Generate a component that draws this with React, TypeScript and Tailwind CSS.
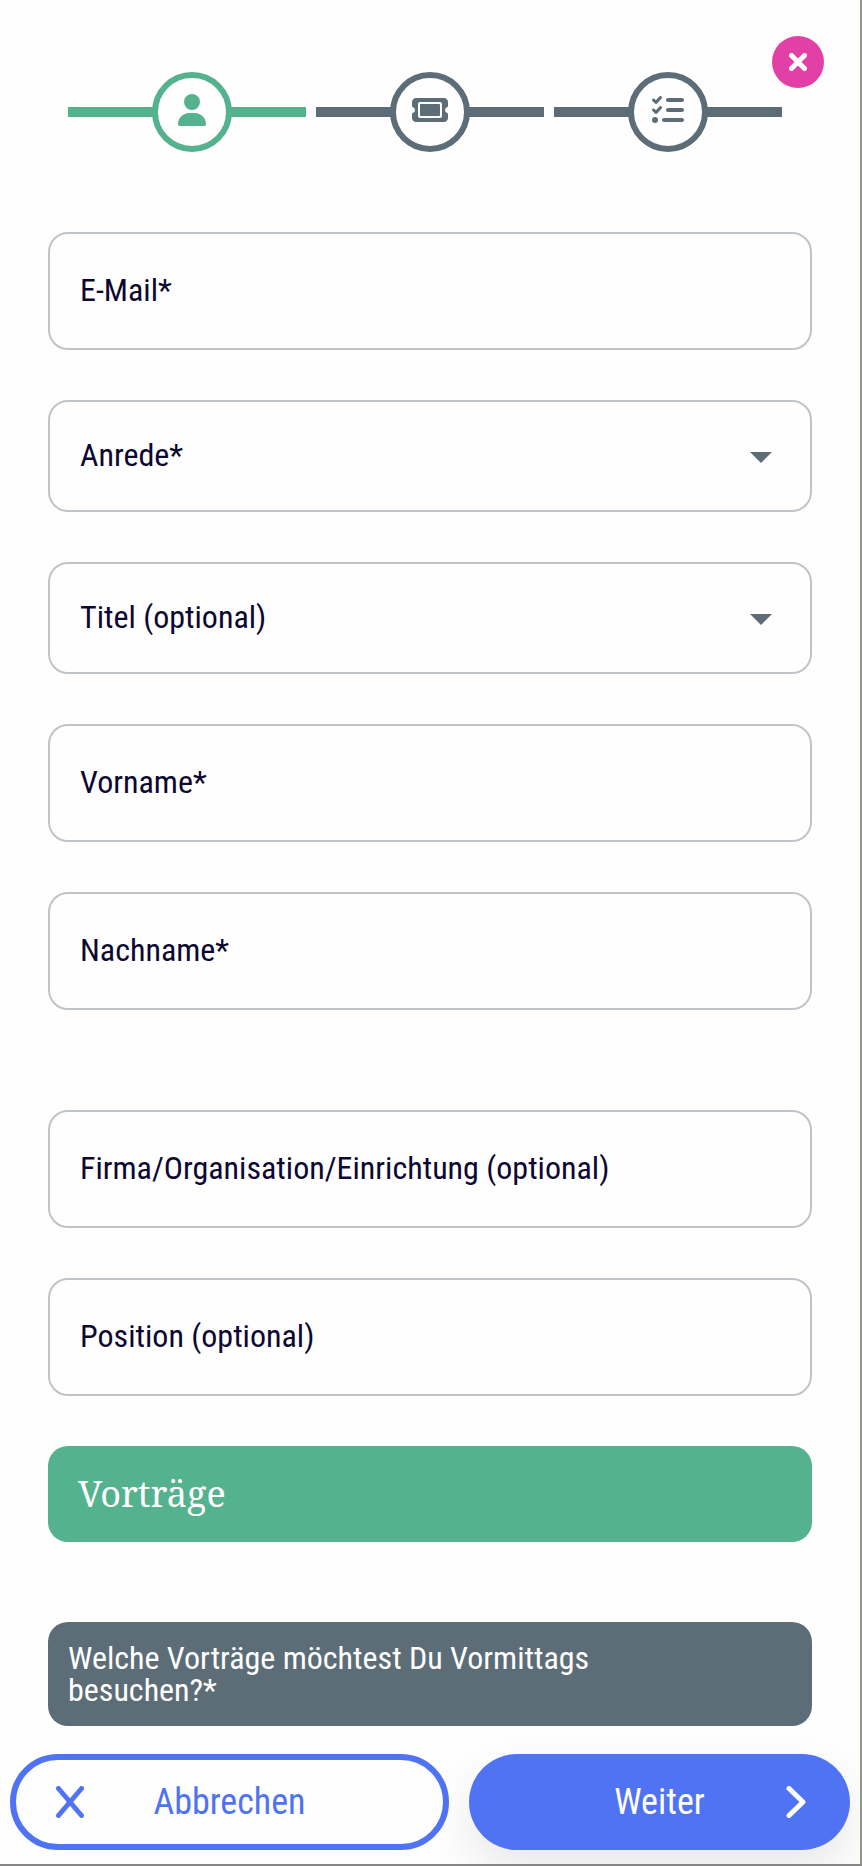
import type { ReactNode } from "react";
import { FaListCheck, FaTicket, FaUser } from "react-icons/fa6";

const fields = [
  { id: "email", label: "E-Mail*", type: "email" },
  { id: "salutation", label: "Anrede*", options: ["Frau", "Herr", "Divers"] },
  { id: "title", label: "Titel (optional)", options: ["Dr.", "Prof."] },
  { id: "firstname", label: "Vorname*", type: "text" },
  { id: "lastname", label: "Nachname*", type: "text" },
];

const companyFields = [
  { id: "company", label: "Firma/Organisation/Einrichtung (optional)", type: "text" },
  { id: "position", label: "Position (optional)", type: "text" },
];

type FieldProps = { id: string; label: string; type?: string; options?: string[] };

function Field({ id, label, type, options }: FieldProps) {
  if (options) {
    return (
      <div className="relative">
        <select
          id={id}
          aria-label={label}
          defaultValue=""
          className="block h-28 w-full appearance-none rounded-[20px] border-2 border-[#bfc4c9] bg-transparent px-[30px] pb-0.5 text-[32px] text-[#0b0730]"
        >
          <option value="">{label}</option>
          {options.map((o) => (
            <option key={o}>{o}</option>
          ))}
        </select>
        <svg viewBox="0 0 22 11" className="pointer-events-none absolute top-[52px] right-10 h-[11px] w-[22px] fill-[#5c6d78]">
          <path d="M0 0h22L11 11z" />
        </svg>
      </div>
    );
  }
  return (
    <input
      id={id}
      type={type}
      aria-label={label}
      placeholder={label}
      className="block h-[118px] w-full rounded-[20px] border-2 border-[#bfc4c9] bg-transparent px-[30px] pb-0.5 text-[32px] text-[#0b0730] placeholder:text-[#0b0730]"
    />
  );
}

function Step({ icon, active, label }: { icon: ReactNode; active?: boolean; label: string }) {
  return (
    <li
      aria-label={label}
      className={`flex flex-1 items-center pl-[10px] ${active ? "text-[#55b28f]" : "text-[#5c6d78]"}`}
    >
      <span className={`-mr-0.5 h-[10px] flex-1 bg-current ${active ? "-ml-[10px] pl-[10px]" : ""}`} />
      <span className="flex h-20 w-20 items-center justify-center rounded-full border-6 border-current pb-1 text-[32px]">
        {icon}
      </span>
      <span className="-ml-0.5 h-[10px] flex-1 bg-current" />
    </li>
  );
}

export default function App() {
  return (
    <div className="min-h-screen overflow-hidden border-r-2 border-b-2 border-r-[#92958c] border-b-[#868686] bg-[#fefefe] font-['Roboto_Condensed','Liberation_Sans_Narrow',sans-serif]">
      <form className="relative" onSubmit={(e) => e.preventDefault()}>
        <button
          type="button"
          aria-label="Schließen"
          className="absolute top-9 right-9 flex h-[52px] w-[52px] items-center justify-center rounded-full bg-[#e340a7]"
        >
          <svg viewBox="0 0 18 18" className="h-[18px] w-[18px] stroke-white" strokeWidth="5" strokeLinecap="round">
            <path d="M2.5 2.5l13 13M15.5 2.5l-13 13" />
          </svg>
        </button>

        <ol className="mr-[78px] ml-[68px] flex pt-[72px]">
          <Step active label="Person" icon={<FaUser />} />
          <Step label="Ticket" icon={<FaTicket className="h-8 w-9" />} />
          <Step label="Auswahl" icon={<FaListCheck />} />
        </ol>

        <div className="mt-20 px-12">
          <div className="flex flex-col gap-[50px]">
            {fields.map((f) => (
              <Field key={f.id} {...f} />
            ))}
          </div>
          <div className="mt-[100px] flex flex-col gap-[50px]">
            {companyFields.map((f) => (
              <Field key={f.id} {...f} />
            ))}
            <h2 className="flex h-24 items-center rounded-[20px] bg-[#55b28f] px-[30px] font-['Roboto_Slab','Noto_Serif','DejaVu_Serif',serif] text-4xl text-white">
              Vorträge
            </h2>
          </div>
          <h3 className="mt-20 rounded-[20px] bg-[#5c6d78] p-5 text-[32px] leading-8 text-white">
            <span className="block max-w-[600px]">Welche Vorträge möchtest Du Vormittags besuchen?*</span>
          </h3>
        </div>

        <div className="mt-7 grid grid-cols-[439fr_381fr] gap-5 px-[10px] pb-[14px] text-4xl">
          <button
            type="button"
            className="grid h-24 grid-cols-[32px_1fr_32px] items-center rounded-full border-6 border-[#5073f3] px-10 text-[#5073f3]"
          >
            <svg viewBox="0 0 28 32" className="h-8 w-7 fill-none stroke-current" strokeWidth="5" strokeLinecap="round">
              <path d="M2.5 2.5l23 27M25.5 2.5l-23 27" />
            </svg>
            <span>Abbrechen</span>
          </button>
          <button
            type="submit"
            className="grid h-24 grid-cols-[32px_1fr_32px] items-center rounded-full bg-[#5073f3] px-11 text-white shadow-[0_20px_48px_rgba(0,0,0,0.09)]"
          >
            <span className="col-start-2">Weiter</span>
            <svg viewBox="0 0 20 32" className="h-8 w-5 justify-self-end fill-none stroke-current" strokeWidth="5" strokeLinecap="round" strokeLinejoin="round">
              <path d="M3 2.5L17 16 3 29.5" />
            </svg>
          </button>
        </div>
      </form>
    </div>
  );
}
